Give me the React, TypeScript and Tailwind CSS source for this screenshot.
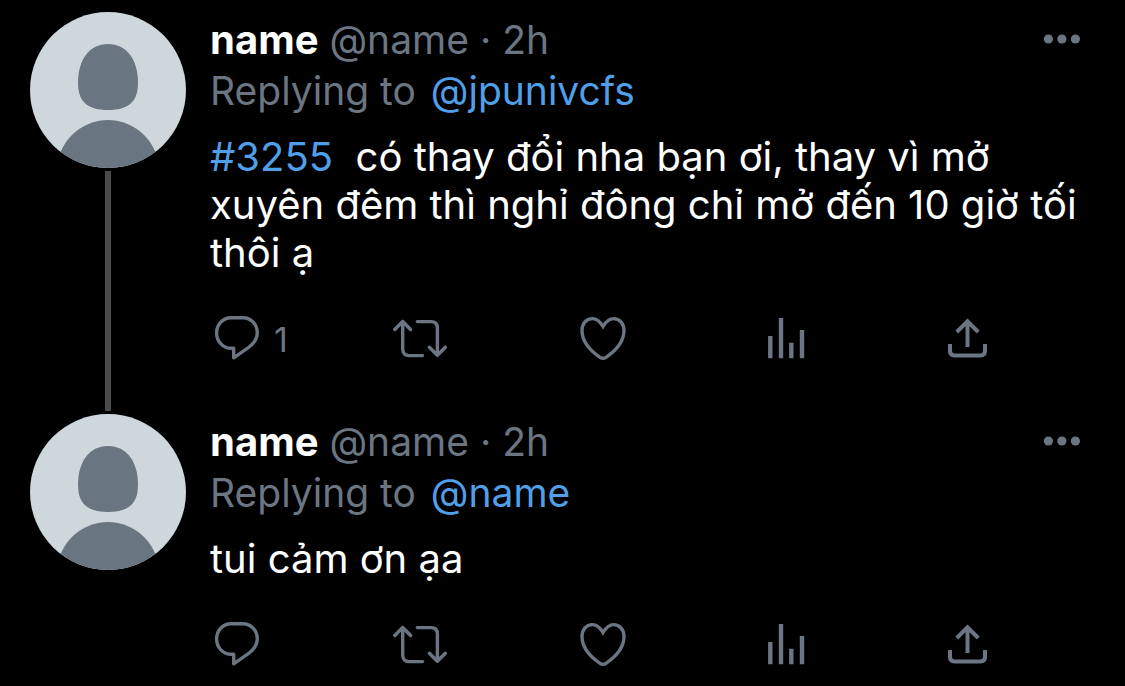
import type { ReactNode } from 'react';

interface Tweet {
  id: number;
  name: string;
  handle: string;
  time: string;
  replyingTo: string;
  hashtag?: string;
  text: string;
  replies?: number;
}

const tweets: Tweet[] = [
  {
    id: 1,
    name: 'name',
    handle: '@name',
    time: '2h',
    replyingTo: '@jpunivcfs',
    hashtag: '#3255',
    text: 'có thay đổi nha bạn ơi, thay vì mở xuyên đêm thì nghỉ đông chỉ mở đến 10 giờ tối thôi ạ',
    replies: 1,
  },
  {
    id: 2,
    name: 'name',
    handle: '@name',
    time: '2h',
    replyingTo: '@name',
    text: 'tui cảm ơn ạa',
  },
];

function Avatar() {
  return (
    <svg viewBox="0 0 156 156" className="w-[156px] h-[156px] rounded-full bg-[#ced7dc]" aria-hidden="true">
      <path
        d="M78 32C97 32 108 48 108 71C108 90 98 98 78 98C58 98 48 90 48 71C48 48 59 32 78 32Z"
        fill="#697682"
      />
      <circle cx="78" cy="159" r="51" fill="#697682" />
    </svg>
  );
}

function Icon({ children }: { children: ReactNode }) {
  return (
    <svg
      viewBox="0 0 54 48"
      className="w-[54px] h-12 shrink-0"
      fill="none"
      stroke="currentColor"
      strokeWidth="3.4"
      aria-hidden="true"
    >
      {children}
    </svg>
  );
}

const actions = [
  {
    label: 'Reply',
    icon: (
      <Icon>
        <path
          d="M21 3.7H33C41 3.7 47.3 10.5 47.3 18.5C47.3 24.5 44 29.5 38.5 33.5L23.7 43.8V34.3H21.5C13 34.3 6.6 27.5 6.6 19C6.6 10.5 13 3.7 21 3.7Z"
          strokeLinejoin="round"
        />
      </Icon>
    ),
  },
  {
    label: 'Retweet',
    icon: (
      <Icon>
        <g strokeLinecap="round" strokeLinejoin="round">
          <path d="M1.8 15.5L9.7 7.5L17.6 15.5M9.7 7.5V35C9.7 39 12 41.6 16 41.6H29.5" />
          <path d="M24.3 7.6H38C42 7.6 44.4 10 44.4 14V41.2M36.4 33.3L44.4 41.2L52.3 33.3" />
        </g>
      </Icon>
    ),
  },
  {
    label: 'Like',
    icon: (
      <Icon>
        <path d="M27 12.5C24 7.5 20.5 4.6 16.5 4.6C10 4.6 6 10 6 16.5C6 27 14 36.5 24 43.3Q27 45.3 30 43.3C40 36.5 48 27 48 16.5C48 10 44 4.6 37.5 4.6C33.5 4.6 30 7.5 27 12.5Z" />
      </Icon>
    ),
  },
  {
    label: 'View analytics',
    icon: (
      <Icon>
        <path d="M11.3 22V44.3M22 4V44.3M32.3 28.7V44.3M43 16V44.3" strokeWidth="4.4" />
      </Icon>
    ),
  },
  {
    label: 'Share',
    icon: (
      <Icon>
        <g strokeWidth="4">
          <path d="M8 30V37C8 40 9.5 41.4 12.5 41.4H38.5C41.5 41.4 43 40 43 37V30" />
          <path d="M25.5 33V7M14.8 18L25.5 7.3L36.2 18" />
        </g>
      </Icon>
    ),
  },
];

function TweetItem({ tweet, hasThread }: { tweet: Tweet; hasThread: boolean }) {
  return (
    <article className="flex gap-6 pl-[30px]">
      <div className="flex flex-col items-center shrink-0">
        <Avatar />
        {hasThread && <div className="w-1.5 flex-1 my-[3px] bg-[#4a4a4a]" />}
      </div>

      <div className={`flex-1 min-w-0 pt-1 ${hasThread ? 'pb-[52px]' : 'pb-[18px]'}`}>
        {/* Author line */}
        <header className="flex items-center justify-between h-12 pr-11 mb-[3px]">
          <div className="whitespace-pre">
            <span className="font-bold text-white">{tweet.name}</span>
            <span className="text-[39px]"> {tweet.handle} · {tweet.time}</span>
          </div>
          <button type="button" aria-label="More" className="pb-0.5">
            <svg viewBox="0 0 38 10" className="w-[38px] h-2.5" fill="currentColor" aria-hidden="true">
              <circle cx="5.4" cy="5" r="4.6" />
              <circle cx="18.9" cy="5" r="4.6" />
              <circle cx="32.4" cy="5" r="4.6" />
            </svg>
          </button>
        </header>

        <p className="text-[39px]">
          Replying to <a href="#profile" className="ml-1 text-[#509fe9]">{tweet.replyingTo}</a>
        </p>

        <p className="mt-[18px] pr-11 text-white">
          {tweet.hashtag && (
            <>
              <a href="#hashtag" className="text-[#509fe9]">{tweet.hashtag}</a>
              {'\u00a0 '}
            </>
          )}
          {tweet.text}
        </p>

        {/* Action bar */}
        <div className="grid grid-cols-5 mt-[37px]">
          {actions.map((action) => (
            <button key={action.label} type="button" aria-label={action.label} className="flex items-center gap-2.5">
              {action.icon}
              {action.label === 'Reply' && tweet.replies && (
                <span className="pt-1 text-[34px] leading-[44px]">{tweet.replies}</span>
              )}
            </button>
          ))}
        </div>
      </div>
    </article>
  );
}

export default function App() {
  return (
    <main className="min-h-screen bg-black pt-3 font-['Inter','Noto_Sans',sans-serif] text-[40px] leading-[48px] text-[#6b7682]">
      {tweets.map((tweet, index) => (
        <TweetItem key={tweet.id} tweet={tweet} hasThread={index < tweets.length - 1} />
      ))}
    </main>
  );
}
